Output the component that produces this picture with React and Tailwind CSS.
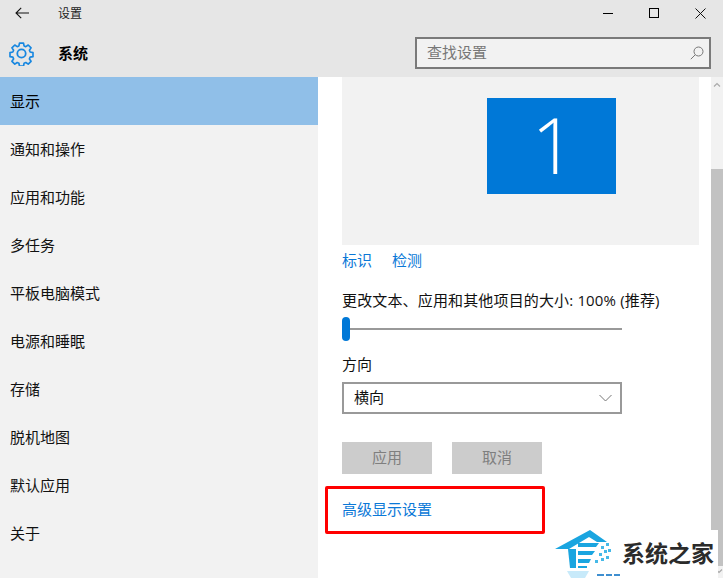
import React from "react";

const cjk = { fontFamily: '"Noto Sans CJK SC", "Liberation Sans", sans-serif' };
const latinFirst = { fontFamily: '"Open Sans", "Noto Sans CJK SC", sans-serif' };
const items = ["通知和操作", "应用和功能", "多任务", "平板电脑模式", "电源和睡眠", "存储", "脱机地图", "默认应用", "关于"];

function Gear() {
  return (
    <svg width="25" height="25" viewBox="0 0 25 25" fill="none" stroke="#1787e0" strokeWidth="1.8" strokeLinejoin="round">
      <circle cx="12.5" cy="12.5" r="4.2" />
      <path d="M10.3 1.2h4.4l.6 3.1 1.9.8 2.6-1.8 3.1 3.1-1.8 2.6.8 1.9 3.1.6v4.4l-3.1.6-.8 1.9 1.8 2.6-3.1 3.1-2.6-1.8-1.9.8-.6 3.1h-4.4l-.6-3.1-1.9-.8-2.6 1.8-3.1-3.1 1.8-2.6-.8-1.9-3.1-.6v-4.4l3.1-.6.8-1.9-1.8-2.6 3.1-3.1 2.6 1.8 1.9-.8z" transform="translate(12.5 12.5) scale(.92) translate(-12.5 -12.5)" />
    </svg>
  );
}

function Logo() {
  return (
    <div className="absolute left-[555px] top-[530px] w-[163px] h-[48px] bg-white flex items-start">
      <svg width="66" height="48" viewBox="0 0 66 48" className="shrink-0">
        <path d="M0 19 L35 0 L52 12 L42 12 L34 7 L14 19 Z" fill="#1aa5e0" />
        <path d="M13 19 H21 V38 H15 Z" fill="#1aa5e0" />
        <path d="M23 13 H44 L41 17 H23 Z M23 21 H40 L37 25 H23 Z M23 29 H36 L34 33 H23 Z M23 36 H32 V38 H23 Z" fill="#1aa5e0" />
        <path d="M46 16h3v3h-3z M51 13h3v3h-3z M44 23h3v3h-3z M49 20h3v3h-3z M53 19h3v3h-3z M40 30h3v3h-3z M46 28h3v3h-3z M51 26h3v3h-3z" fill="#45b9e8" />
        <path d="M12 41 H34 L30 48 H16 Z" fill="#c8eafa" />
        <path d="M42 44h7v2h-7z M51 44h6v2h-6z M59 44h6v2h-6z" fill="#3f8fd0" />
      </svg>
      <span className="mt-[7px] text-[23px] leading-[30px] font-bold text-[#2b2b2b] whitespace-nowrap ml-[1px]" style={cjk}>系统之家</span>
    </div>
  );
}

export default function App() {
  return (
    <div className="relative w-[723px] h-[578px] overflow-hidden bg-white flex flex-col text-[15px] text-black" style={cjk}>
      <header className="h-[77px] shrink-0 bg-[#e6e6e6] flex flex-col">
        <div className="h-[26px] flex items-center">
          <svg width="14" height="12" viewBox="0 0 14 12" fill="none" stroke="#111" strokeWidth="1.1" className="ml-[15px]">
            <path d="M14 6H1M6.2.8 1 6l5.2 5.2" />
          </svg>
          <span className="ml-[29px] text-[12px] text-[#222]">设置</span>
          <div className="ml-auto flex items-center">
            <div className="w-[10px] h-[1px] bg-black mr-[36px]" />
            <div className="w-[10px] h-[10px] border border-black mr-[36px]" />
            <svg width="11" height="11" viewBox="0 0 11 11" stroke="#111" strokeWidth="1" className="mr-[17px]">
              <path d="M.5.5l10 10M10.5.5l-10 10" />
            </svg>
          </div>
        </div>
        <div className="flex-1 flex items-center pt-[3px]">
          <div className="ml-[9px] flex"><Gear /></div>
          <span className="ml-[24px] text-[15px] font-bold">系统</span>
          <div className="ml-auto mr-[12px] w-[296px] h-[32px] border-[2px] border-[#7a7a7a] bg-[#f2f2f2] flex items-center pl-[10px] pr-[5px]">
            <span className="text-[#777] text-[15px] -mt-[2px]">查找设置</span>
            <svg width="14" height="14" viewBox="0 0 14 14" fill="none" stroke="#777" strokeWidth="1" className="ml-auto">
              <circle cx="8.5" cy="5.5" r="4.5" />
              <path d="M5.2 8.8.8 13.2" />
            </svg>
          </div>
        </div>
      </header>

      <div className="flex-1 flex min-h-0">
        <nav className="w-[318px] shrink-0 bg-[#f2f2f2] flex flex-col">
          <div className="h-[48px] bg-[#90bfe8] flex items-center pl-[10px]">显示</div>
          {items.map((t) => (
            <div key={t} className="h-[48px] flex items-center pl-[10px] text-[#111]">{t}</div>
          ))}
        </nav>

        <main className="flex-1 flex flex-col pl-[24px] min-w-0">
          <div className="w-[357px] h-[168px] shrink-0 bg-[#f2f2f2] flex pl-[145px] pt-[21px]">
            <div className="w-[129px] h-[96px] bg-[#0078d7] flex items-center justify-center pb-[3px] pl-[4px]">
              <span className="text-white text-[77px] leading-none" style={{ fontFamily: '"Open Sans", sans-serif', fontWeight: 300 }}>1</span>
            </div>
          </div>
          <div className="flex gap-[20px] mt-[5px] h-[20px] items-center text-[#0a78d7]">
            <span>标识</span>
            <span>检测</span>
          </div>
          <div className="mt-[20px] h-[20px] flex items-center whitespace-nowrap text-[#111] tracking-[0.15px]" style={latinFirst}>更改文本、应用和其他项目的大小: 100% (推荐)</div>
          <div className="relative mt-[7px] w-[280px] h-[24px] flex items-center">
            <div className="w-full h-[2px] bg-[#999]" />
            <div className="absolute left-0 top-0 w-[8px] h-[24px] rounded-full bg-[#0078d7]" />
          </div>
          <div className="mt-[13px] h-[20px] flex items-center text-[#111]">方向</div>
          <div className="mt-[8px] w-[280px] h-[32px] border-[2px] border-[#999] flex items-center pl-[10px] pr-[8px]">
            <span className="text-[#111] -mt-[2px]">横向</span>
            <svg width="13" height="8" viewBox="0 0 13 8" fill="none" stroke="#777" strokeWidth="1" className="ml-auto">
              <path d="M.5 1l6 6 6-6" />
            </svg>
          </div>
          <div className="mt-[28px] flex gap-[20px]">
            <div className="w-[90px] h-[32px] bg-[#cccccc] flex items-center justify-center text-[#7f7f7f] pb-[1px]">应用</div>
            <div className="w-[90px] h-[32px] bg-[#cccccc] flex items-center justify-center text-[#7f7f7f] pb-[1px]">取消</div>
          </div>
          <div className="mt-[25px] h-[20px] flex items-center text-[#0a78d7]">高级显示设置</div>
        </main>

        <aside className="w-[12px] shrink-0 bg-[#f2f2f2] flex flex-col items-center">
          <svg width="8" height="6" viewBox="0 0 8 6" fill="none" stroke="#aaa" strokeWidth="1.2" className="mt-[5px]">
            <path d="M1 4.5l3-3 3 3" />
          </svg>
          <div className="mt-[81px] w-full h-[397px] bg-[#c2c2c2]" />
          <svg width="8" height="6" viewBox="0 0 8 6" fill="none" stroke="#aaa" strokeWidth="1.2" className="mt-[2px] ml-auto">
            <path d="M1 1.5l3 3 3-3" />
          </svg>
        </aside>
      </div>

      <div className="absolute left-[325px] top-[486px] w-[220px] h-[48px] border-[3px] border-[#ff0000] rounded-[2px]" />
      <Logo />
    </div>
  );
}
